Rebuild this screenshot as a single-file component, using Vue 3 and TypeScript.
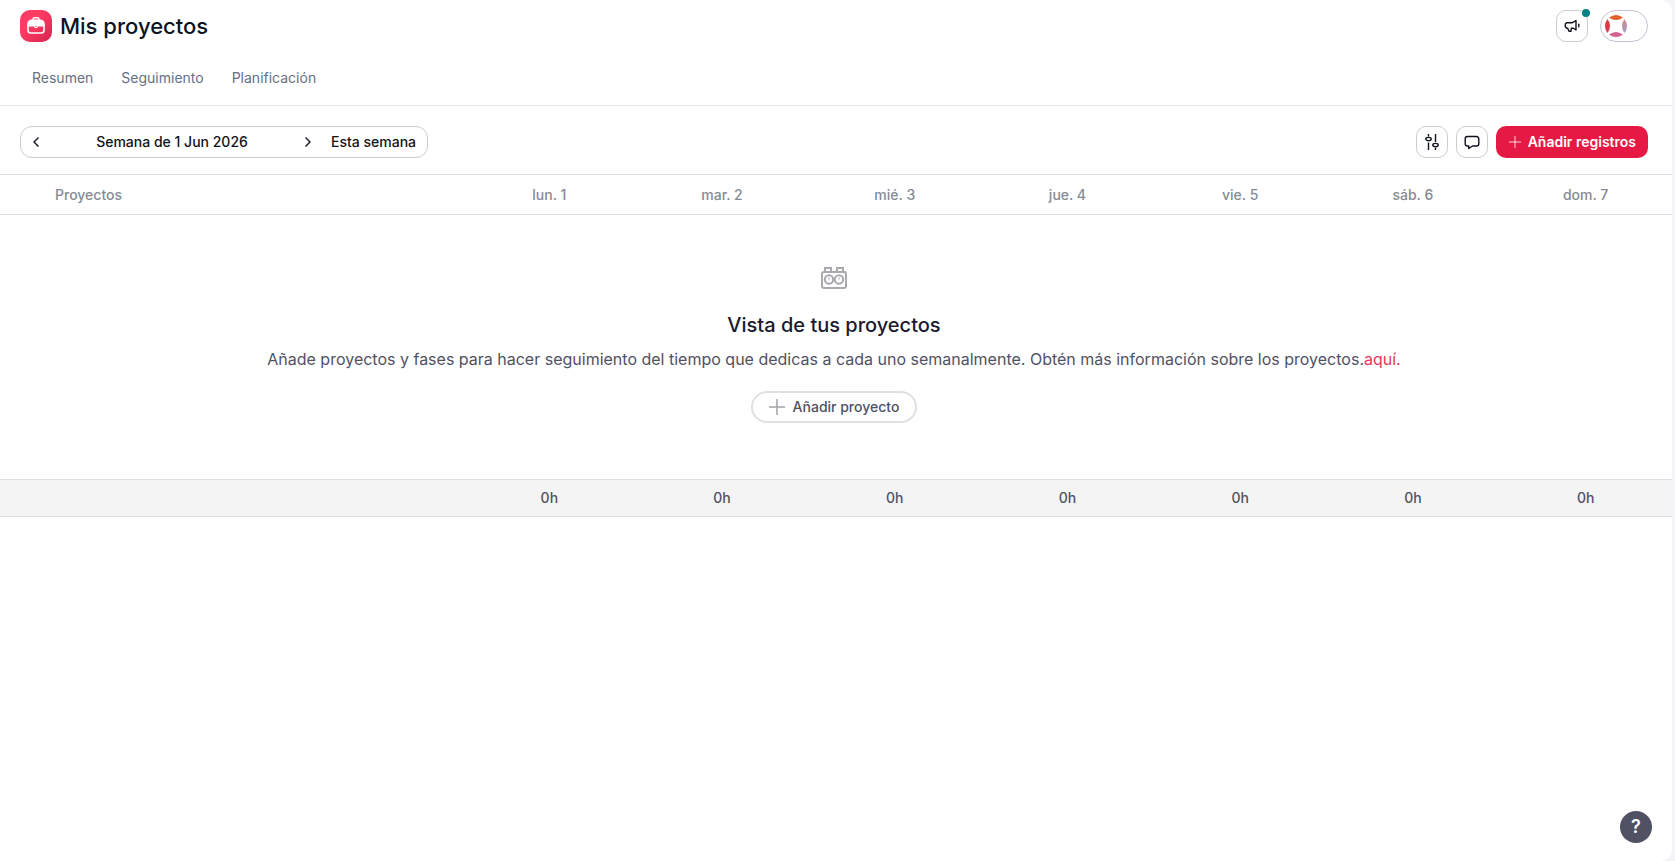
<script setup lang="ts">
interface Day {
  label: string
  total: string
}

const tabs: string[] = ['Resumen', 'Seguimiento', 'Planificación']

const days: Day[] = [
  { label: 'lun. 1', total: '0h' },
  { label: 'mar. 2', total: '0h' },
  { label: 'mié. 3', total: '0h' },
  { label: 'jue. 4', total: '0h' },
  { label: 'vie. 5', total: '0h' },
  { label: 'sáb. 6', total: '0h' },
  { label: 'dom. 7', total: '0h' },
]
</script>

<template>
  <div class="page">
    <main class="panel">
      <header class="header">
        <div class="brand">
          <span class="logo">
            <svg width="20" height="20" viewBox="0 0 20 20" fill="none" aria-hidden="true">
              <path d="M7 4V3.200C7 2.300 7.700 1.800 8.600 1.800h2.800c.9 0 1.600.5 1.600 1.400V4" stroke="#fff" stroke-width="1.500" />
              <path d="M1.200 10.500V8a4.500 4.500 0 0 1 4.500-4.500h8.600A4.500 4.500 0 0 1 18.800 8v2.500z" fill="#fff" />
              <path d="M2 9.500v4.700a2.800 2.800 0 0 0 2.800 2.800h10.400a2.800 2.800 0 0 0 2.800-2.800V9.500" stroke="#fff" stroke-width="1.600" />
              <circle cx="10" cy="10.500" r="1.800" fill="#fff" />
              <circle cx="10" cy="10.500" r=".7" fill="#f0506f" />
            </svg>
          </span>
          <h1>Mis proyectos</h1>
        </div>
        <div class="actions">
          <button class="icon-button news" type="button" aria-label="Novedades">
            <svg width="16" height="16" viewBox="0 0 16 16" fill="none" stroke="#10131d" stroke-width="1.400" stroke-linejoin="round" stroke-linecap="round" aria-hidden="true">
              <path d="M12 2.500v9.500L9.500 10.200H7.300l-.3 3H5L3.700 10.200H2.700L1.300 8.800V6l1.200-1.300h6z" />
              <path d="M14.800 6.200v2.600" />
            </svg>
            <span class="dot"></span>
          </button>
          <button class="profile" type="button" aria-label="Perfil">
            <svg width="22" height="22" viewBox="0 0 22 22" aria-hidden="true">
              <defs>
                <linearGradient id="ring-left" x1="0" y1="0" x2="0" y2="1">
                  <stop offset="0" stop-color="#dc3d2e" />
                  <stop offset="1" stop-color="#d9365f" />
                </linearGradient>
                <linearGradient id="ring-right" x1="0" y1="0" x2="0" y2="1">
                  <stop offset="0" stop-color="#d08a80" />
                  <stop offset="1" stop-color="#a09bd0" />
                </linearGradient>
              </defs>
              <path d="M4 2.500Q11-2.500 18 2.500Q11 7.500 4 2.500z" fill="#df6128" />
              <path d="M4 19.500Q11 14.500 18 19.500Q11 24.500 4 19.500z" fill="#d4608f" />
              <path d="M2.500 4Q-2.500 11 2.500 18Q7.500 11 2.500 4z" fill="url(#ring-left)" />
              <path d="M19.500 4Q14.500 11 19.500 18Q24.500 11 19.500 4z" fill="url(#ring-right)" />
            </svg>
          </button>
        </div>
      </header>

      <nav class="tabs">
        <a v-for="tab in tabs" :key="tab" href="#">{{ tab }}</a>
      </nav>

      <section class="toolbar">
        <div class="week">
          <button class="arrow" type="button" aria-label="Semana anterior">
            <svg width="12" height="12" viewBox="0 0 12 12" fill="none" stroke="#10131d" stroke-width="1.400" aria-hidden="true">
              <path d="M8.500 1.500L4 6l4.500 4.500" />
            </svg>
          </button>
          <button class="current" type="button">Semana de 1 Jun 2026</button>
          <button class="arrow" type="button" aria-label="Semana siguiente">
            <svg width="12" height="12" viewBox="0 0 12 12" fill="none" stroke="#10131d" stroke-width="1.400" aria-hidden="true">
              <path d="M3.500 1.500L8 6l-4.500 4.500" />
            </svg>
          </button>
          <button class="today" type="button">Esta semana</button>
        </div>
        <div class="tools">
          <button class="icon-button" type="button" aria-label="Ajustes">
            <svg width="16" height="16" viewBox="0 0 16 16" fill="none" stroke="#10131d" stroke-width="1.400" aria-hidden="true">
              <path d="M4.500 0v2.500M4.500 8.500V16M11.500 0v8M11.500 13.500V16" />
              <ellipse cx="4.500" cy="5" rx="2.700" ry="1.600" />
              <ellipse cx="11.500" cy="11" rx="2.700" ry="1.600" />
            </svg>
          </button>
          <button class="icon-button" type="button" aria-label="Comentarios">
            <svg width="16" height="16" viewBox="0 0 16 16" fill="none" stroke="#10131d" stroke-width="1.400" stroke-linejoin="round" aria-hidden="true">
              <path d="M3.500 2.500h9a2.300 2.300 0 0 1 2.300 2.300v4.900a2.300 2.300 0 0 1-2.300 2.300H8.500L4.700 14.500V12H3.500a2.300 2.300 0 0 1-2.300-2.300V4.800a2.300 2.300 0 0 1 2.300-2.300z" />
            </svg>
          </button>
          <button class="primary" type="button">
            <svg width="14" height="14" viewBox="0 0 14 14" stroke="#fff" stroke-opacity=".8" aria-hidden="true">
              <path d="M7 1v12M1 7h12" />
            </svg>
            Añadir registros
          </button>
        </div>
      </section>

      <table class="grid">
        <thead>
          <tr>
            <th class="projects" scope="col">Proyectos</th>
            <th v-for="day in days" :key="day.label" scope="col">{{ day.label }}</th>
          </tr>
        </thead>
        <tbody>
          <tr>
            <td :colspan="days.length + 1">
              <div class="empty">
                <svg width="28" height="28" viewBox="0 0 28 28" fill="none" stroke="#a9a9ae" stroke-width="2" aria-hidden="true">
                  <path d="M5 9V5h6v4M17 9V5h6v4" />
                  <rect x="2" y="9" width="24" height="16" rx="2" />
                  <circle cx="9" cy="16.500" r="4.200" />
                  <circle cx="19" cy="16.500" r="4.200" />
                  <path d="M8.500 15.500h1.200M18.500 15.500h1.200" />
                </svg>
                <h2>Vista de tus proyectos</h2>
                <p>Añade proyectos y fases para hacer seguimiento del tiempo que dedicas a cada uno semanalmente. Obtén más información sobre los proyectos.<a href="#">aquí.</a></p>
                <button class="add" type="button">
                  <svg width="16" height="16" viewBox="0 0 16 16" stroke="#a3a3a8" stroke-width="1.500" aria-hidden="true">
                    <path d="M8 0v16M0 8h16" />
                  </svg>
                  Añadir proyecto
                </button>
              </div>
            </td>
          </tr>
        </tbody>
        <tfoot>
          <tr>
            <td></td>
            <td v-for="day in days" :key="day.label">{{ day.total }}</td>
          </tr>
        </tfoot>
      </table>
    </main>
    <button class="help" type="button" aria-label="Ayuda">?</button>
  </div>
</template>

<style>
body {
  margin: 0;
}
</style>

<style scoped>
.page {
  box-sizing: border-box;
  min-height: 100vh;
  display: flex;
  padding-right: 3px;
  background: #f3f4f6;
  font-family: Inter, "Liberation Sans", sans-serif;
  font-size: 14px;
  line-height: 20px;
  color: #10131d;
}

.panel {
  flex: 1;
  min-width: 0;
  background: #fff;
  border-radius: 0 12px 12px 0;
}

button {
  box-sizing: border-box;
  margin: 0;
  padding: 0;
  border: 0;
  background: none;
  font: inherit;
  color: inherit;
  cursor: pointer;
}

a {
  text-decoration: none;
}

svg {
  display: block;
}

.header {
  display: flex;
  align-items: center;
  justify-content: space-between;
  padding: 10px 24px 10px 20px;
}

.brand {
  display: flex;
  align-items: center;
  gap: 8px;
}

.logo {
  display: grid;
  place-items: center;
  width: 32px;
  height: 32px;
  border-radius: 10px;
  background: linear-gradient(135deg, #ff3a63 40%, #d42450);
}

h1 {
  margin: 0;
  font-size: 22px;
  line-height: 32px;
  font-weight: 500;
  color: #0c1424;
}

.actions {
  display: flex;
  gap: 12px;
}

.icon-button {
  display: grid;
  place-items: center;
  width: 32px;
  height: 32px;
  border: 1px solid #cbccd3;
  border-radius: 10px;
  background: #fff;
}

.news {
  position: relative;
}

.dot {
  position: absolute;
  top: -2px;
  right: -3px;
  width: 8px;
  height: 8px;
  border-radius: 50%;
  background: #078088;
}

.profile {
  display: flex;
  align-items: center;
  width: 48px;
  height: 32px;
  padding-left: 4px;
  border: 1px solid #c3c3d0;
  border-radius: 16px;
}

.tabs {
  display: flex;
  gap: 28px;
  padding: 16px 32px 17px;
  border-bottom: 1px solid #e5e6e9;
}

.tabs a {
  color: #667085;
}

.toolbar {
  display: flex;
  align-items: center;
  justify-content: space-between;
  padding: 20px 24px 16px 20px;
}

.week {
  box-sizing: border-box;
  display: flex;
  height: 32px;
  border: 1px solid #cbccd3;
  border-radius: 12px;
  font-weight: 500;
}

.arrow {
  display: grid;
  place-items: center;
  width: 30px;
}

.current {
  width: 242px;
}

.today {
  padding: 0 11px 0 8px;
}

.tools {
  display: flex;
  gap: 8px;
}

.primary {
  display: flex;
  align-items: center;
  gap: 6px;
  height: 32px;
  padding: 0 12px;
  border-radius: 10px;
  background: #e51943;
  font-weight: 600;
  color: #fff;
}

.grid {
  width: 100%;
  table-layout: fixed;
  border-collapse: separate;
  border-spacing: 0;
}

th,
td {
  padding: 0;
  text-align: center;
}

th {
  height: 39px;
  border-top: 1px solid #dedfe2;
  border-bottom: 1px solid #dedfe2;
  font-weight: 500;
  color: #868a93;
}

.projects {
  box-sizing: border-box;
  width: 463px;
  padding-left: 55px;
  text-align: left;
}

.empty {
  display: flex;
  flex-direction: column;
  align-items: center;
  padding: 48px 20px 56px 16px;
  color: #515164;
}

h2 {
  margin: 20px 0 8px;
  font-size: 20px;
  line-height: 28px;
  font-weight: 500;
  color: #1a1a2e;
}

p {
  margin: 0 0 20px;
  font-size: 16px;
  line-height: 24px;
}

p a {
  color: #e5375d;
}

.add {
  display: flex;
  align-items: center;
  gap: 8px;
  height: 32px;
  padding: 0 16px;
  border: 2px solid #e0e0e2;
  border-radius: 16px;
  font-weight: 500;
}

tfoot td {
  height: 36px;
  border-top: 1px solid #dfe0e3;
  border-bottom: 1px solid #dfe0e3;
  background: #f4f4f4;
  font-weight: 500;
  color: #515164;
}

.help {
  position: fixed;
  right: 23px;
  bottom: 18px;
  width: 32px;
  height: 32px;
  border-radius: 50%;
  background: #515164;
  font-size: 18px;
  font-weight: 600;
  color: #fff;
}
</style>
